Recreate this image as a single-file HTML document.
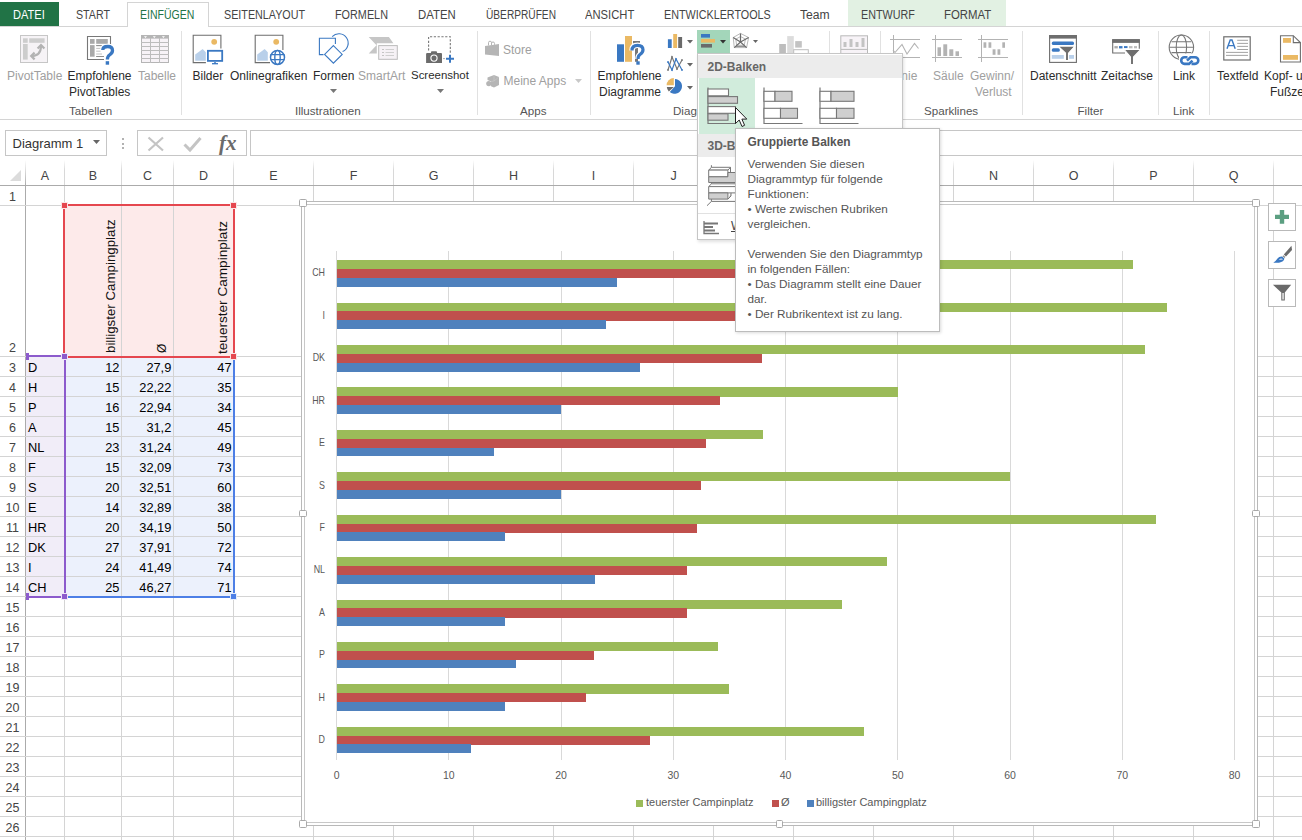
<!DOCTYPE html><html><head><meta charset="utf-8"><style>
html,body{margin:0;padding:0;}
body{width:1302px;height:840px;overflow:hidden;position:relative;background:#fff;font-family:"Liberation Sans",sans-serif;}
div{box-sizing:border-box;}
.t{position:absolute;white-space:nowrap;line-height:1;}
svg{position:absolute;overflow:visible;}
</style></head><body>
<div style="position:absolute;left:0px;top:2px;width:59px;height:24px;background:#217346"></div>
<div style="position:absolute;left:848px;top:0px;width:158px;height:26px;background:#e2f1e3"></div>
<div style="position:absolute;left:0px;top:26px;width:1302px;height:1px;background:#d4d4d4"></div>
<div style="position:absolute;left:127px;top:2px;width:82px;height:25px;background:#fff;border:1px solid #d4d4d4;border-bottom:none"></div>
<div class="t" style="left:13.3px;top:8.59px;font-size:12.3px;color:#fff;font-weight:normal;transform:scaleX(0.898);transform-origin:0 0">DATEI</div>
<div class="t" style="left:76px;top:8.59px;font-size:12.3px;color:#444;font-weight:normal;transform:scaleX(0.867);transform-origin:0 0">START</div>
<div class="t" style="left:140px;top:8.59px;font-size:12.3px;color:#217346;font-weight:normal;transform:scaleX(0.854);transform-origin:0 0">EINFÜGEN</div>
<div class="t" style="left:224px;top:8.59px;font-size:12.3px;color:#444;font-weight:normal;transform:scaleX(0.874);transform-origin:0 0">SEITENLAYOUT</div>
<div class="t" style="left:335px;top:8.59px;font-size:12.3px;color:#444;font-weight:normal;transform:scaleX(0.881);transform-origin:0 0">FORMELN</div>
<div class="t" style="left:418px;top:8.59px;font-size:12.3px;color:#444;font-weight:normal;transform:scaleX(0.925);transform-origin:0 0">DATEN</div>
<div class="t" style="left:485.7px;top:8.59px;font-size:12.3px;color:#444;font-weight:normal;transform:scaleX(0.826);transform-origin:0 0">ÜBERPRÜFEN</div>
<div class="t" style="left:584.7px;top:8.59px;font-size:12.3px;color:#444;font-weight:normal;transform:scaleX(0.913);transform-origin:0 0">ANSICHT</div>
<div class="t" style="left:664px;top:8.59px;font-size:12.3px;color:#444;font-weight:normal;transform:scaleX(0.876);transform-origin:0 0">ENTWICKLERTOOLS</div>
<div class="t" style="left:800px;top:8.59px;font-size:12.3px;color:#444;font-weight:normal;transform:scaleX(0.987);transform-origin:0 0">Team</div>
<div class="t" style="left:861px;top:8.59px;font-size:12.3px;color:#444;font-weight:normal;transform:scaleX(0.874);transform-origin:0 0">ENTWURF</div>
<div class="t" style="left:944px;top:8.59px;font-size:12.3px;color:#444;font-weight:normal;transform:scaleX(0.927);transform-origin:0 0">FORMAT</div>
<div style="position:absolute;left:0px;top:119px;width:1302px;height:1px;background:#d4d4d4"></div>
<div style="position:absolute;left:181px;top:31px;width:1px;height:84px;background:#e1e1e1"></div>
<div style="position:absolute;left:477px;top:31px;width:1px;height:84px;background:#e1e1e1"></div>
<div style="position:absolute;left:590px;top:31px;width:1px;height:84px;background:#e1e1e1"></div>
<div style="position:absolute;left:829px;top:31px;width:1px;height:84px;background:#e1e1e1"></div>
<div style="position:absolute;left:880px;top:31px;width:1px;height:84px;background:#e1e1e1"></div>
<div style="position:absolute;left:1022px;top:31px;width:1px;height:84px;background:#e1e1e1"></div>
<div style="position:absolute;left:1158px;top:31px;width:1px;height:84px;background:#e1e1e1"></div>
<div style="position:absolute;left:1209px;top:31px;width:1px;height:84px;background:#e1e1e1"></div>
<div class="t" style="left:69px;top:105.18px;font-size:11.6px;color:#555;font-weight:normal;">Tabellen</div>
<div class="t" style="left:295px;top:105.18px;font-size:11.6px;color:#555;font-weight:normal;">Illustrationen</div>
<div class="t" style="left:520px;top:105.18px;font-size:11.6px;color:#555;font-weight:normal;">Apps</div>
<div class="t" style="left:1077.5px;top:105.18px;font-size:11.6px;color:#555;font-weight:normal;">Filter</div>
<div class="t" style="left:1173px;top:105.18px;font-size:11.6px;color:#555;font-weight:normal;">Link</div>
<div class="t" style="left:924px;top:105.18px;font-size:11.6px;color:#555;font-weight:normal;">Sparklines</div>
<div class="t" style="left:673px;top:105.18px;font-size:11.6px;color:#555;font-weight:normal;">Diagramme</div>
<svg style="left:18px;top:33px" width="32" height="32" viewBox="18 33 32 32"><rect x="20.5" y="35.5" width="27" height="27" fill="#f6f3f6" stroke="#c6c6c6"/><rect x="23" y="38.3" width="4.7" height="4.5" fill="#cdcdcd"/><rect x="29.2" y="38.3" width="15.4" height="4.5" fill="#cdcdcd"/><rect x="23" y="44" width="4.7" height="15.6" fill="#cdcdcd"/><path d="M31.5 56 C38 56 41 53 41 45.5" fill="none" stroke="#b3b3b3" stroke-width="2.2"/><path d="M37.6 48.6 L41 45 L44.4 48.6" fill="none" stroke="#b3b3b3" stroke-width="2.2"/><path d="M34.6 52.6 L31.2 56 L34.6 59.4" fill="none" stroke="#b3b3b3" stroke-width="2.2"/></svg>
<div class="t" style="left:7px;top:69.84px;font-size:12px;color:#a0a0a0;font-weight:normal;">PivotTable</div>
<svg style="left:85px;top:33px" width="32" height="34" viewBox="85 33 32 34"><path d="M104 59.5 H87.5 V36.5 H110.5 V44" fill="none" stroke="#777" stroke-width="1.1"/><rect x="90" y="39" width="4.6" height="4.8" fill="#aaa"/><rect x="96.2" y="39" width="11.6" height="4.8" fill="#aaa"/><rect x="90" y="45.1" width="4.6" height="11.6" fill="#aaa"/><path d="M96.2 45.6H102M96.2 48.4H101M96.2 51.2H100.5M96.2 54H102M96.2 56.5H104" stroke="#bbb" stroke-width="0.9"/><path d="M96.2 45.6H102M96.2 56.5H104" stroke="#888" stroke-width="0.9"/><path d="M102.8 50 Q102.8 46.5 107.7 46.5 Q112.5 46.5 112.5 50.5 Q112.5 53 109.5 55 Q107.4 56.4 107.4 59.5" fill="none" stroke="#fff" stroke-width="5.5"/><path d="M102.8 50 Q102.8 46.5 107.7 46.5 Q112.5 46.5 112.5 50.5 Q112.5 53 109.5 55 Q107.4 56.4 107.4 59.5" fill="none" stroke="#3a78c2" stroke-width="3.3"/><rect x="105.7" y="61.2" width="3.4" height="3.5" fill="#3a78c2"/></svg>
<div class="t" style="left:67.5px;top:69.84px;font-size:12px;color:#2b2b2b;font-weight:normal;">Empfohlene</div>
<div class="t" style="left:69px;top:85.84px;font-size:12px;color:#2b2b2b;font-weight:normal;">PivotTables</div>
<svg style="left:139px;top:33px" width="32" height="32" viewBox="139 33 32 32"><rect x="141.5" y="35.5" width="27" height="27" fill="#f7f3f7" stroke="#b5b5b5"/><rect x="141" y="35" width="28" height="3.6" fill="#b5b5b5"/><path d="M141 42.5H169M141 46.5H169M141 50.5H169M141 54.5H169M141 58.5H169M150.5 38V63M159.5 38V63" stroke="#bdbdbd" stroke-width="1"/><path d="M144 36.3H147L145.5 38Z M152.8 36.3H155.8L154.3 38Z M161.9 36.3H164.9L163.4 38Z" fill="#fff"/></svg>
<div class="t" style="left:138px;top:69.84px;font-size:12px;color:#a0a0a0;font-weight:normal;">Tabelle</div>
<svg style="left:190px;top:33px" width="36" height="34" viewBox="190 33 36 34"><path d="M205.9 62.6 H193.2 V35.2 H220.89999999999998 V48.6" fill="none" stroke="#6e6e6e" stroke-width="1.1"/><circle cx="214.2" cy="41.800000000000004" r="2.9" fill="#eab964"/><path d="M195.2 60.800000000000004 V54.6 L202.7 49.0 L205.79999999999998 52.2 V60.800000000000004Z" fill="#b9d0ea"/><rect x="207.9" y="50.8" width="14.3" height="10.1" fill="#fff" stroke="#3a78c2" stroke-width="1.8"/><path d="M212 63.7 H218" stroke="#3a78c2" stroke-width="1.3"/><path d="M214 63 H216" stroke="#3a78c2" stroke-width="1.5"/></svg>
<div class="t" style="left:192.5px;top:69.84px;font-size:12px;color:#2b2b2b;font-weight:normal;">Bilder</div>
<svg style="left:252px;top:33px" width="36" height="34" viewBox="252 33 36 34"><path d="M270 62.6 H255.2 V35.2 H282.9 V50" fill="none" stroke="#6e6e6e" stroke-width="1.1"/><circle cx="276.2" cy="41.800000000000004" r="2.9" fill="#eab964"/><path d="M257.2 60.800000000000004 V54.6 L264.7 49.0 L267.8 52.2 V60.800000000000004Z" fill="#b9d0ea"/><circle cx="277.5" cy="57.4" r="8.2" fill="#fff"/><circle cx="277.5" cy="57.4" r="7" fill="none" stroke="#3a78c2" stroke-width="1.5"/><ellipse cx="277.5" cy="57.4" rx="2.7" ry="7" fill="none" stroke="#3a78c2" stroke-width="1.4"/><path d="M270.5 54.6H284.5M270.5 59.6H284.5" stroke="#3a78c2" stroke-width="1.4"/></svg>
<div class="t" style="left:230px;top:69.84px;font-size:12px;color:#2b2b2b;font-weight:normal;">Onlinegrafiken</div>
<svg style="left:316px;top:31px" width="36" height="36" viewBox="316 31 36 36"><path d="M323.5 54.6 H319.4 V38.3 H335.4 V44" fill="none" stroke="#3a78c2" stroke-width="1.1"/><path d="M332.2 36.6 A 9.3 9.3 0 1 1 342.6 51.6" fill="none" stroke="#3a78c2" stroke-width="1.1"/><path d="M333.4 45.6 L342.2 54.4 L333.4 63.2 L324.6 54.4Z" fill="none" stroke="#3a78c2" stroke-width="1.1"/></svg>
<div class="t" style="left:313px;top:69.84px;font-size:12px;color:#2b2b2b;font-weight:normal;">Formen</div>
<svg style="left:330px;top:89px" width="7" height="4" viewBox="0 0 7 4"><path d="M0 0H7L3.5 4Z" fill="#777"/></svg>
<svg style="left:366px;top:34px" width="34" height="28" viewBox="366 34 34 28"><path d="M368.7 37.1 H388.9 L393.4 43.3 H376.8 V53.6 H368.7 L376.5 45.2Z" fill="#c6c6c6"/><rect x="378.7" y="45.6" width="18.6" height="13.7" fill="#f6f2f6" stroke="#bcbcbc" stroke-width="1"/><path d="M382 49.5H384M382 52.5H384M382 55.5H384" stroke="#c4c4c4" stroke-width="1"/><path d="M385.5 49.5H394M385.5 52.5H394M385.5 55.5H394" stroke="#cfcfcf" stroke-width="1"/></svg>
<div class="t" style="left:358px;top:69.84px;font-size:12px;color:#a0a0a0;font-weight:normal;">SmartArt</div>
<svg style="left:424px;top:34px" width="32" height="32" viewBox="424 34 32 32"><path d="M428.6 50.5 V36.7 H450.3 V53.6" fill="none" stroke="#777" stroke-width="1.1" stroke-dasharray="2.2,1.6"/><path d="M426.1 54 Q426.1 53 427.1 53 H430.8 L431.4 51.2 H436.6 L437.2 53 H441 Q442 53 442 54 V62.9 H426.1Z" fill="#6b6b6b"/><circle cx="434" cy="58.1" r="3.1" fill="none" stroke="#fff" stroke-width="1.1"/><path d="M443 58.6H445" stroke="#999" stroke-width="0.8"/><path d="M450 54.8V62.8M446 58.8H454" stroke="#3a78c2" stroke-width="2"/></svg>
<div class="t" style="left:411px;top:70.31px;font-size:11.45px;color:#2b2b2b;font-weight:normal;">Screenshot</div>
<svg style="left:437px;top:89px" width="7" height="4" viewBox="0 0 7 4"><path d="M0 0H7L3.5 4Z" fill="#777"/></svg>
<svg style="left:483px;top:39px" width="18" height="20" viewBox="483 39 18 20"><path d="M485 46 L499 44 V56 L485 54.5Z" fill="#b5b5b5"/><path d="M488.5 45.5 V42.7 Q488.5 41.2 490 41.2 Q491.5 41.2 491.5 42.7 V45 M491.5 43.3 Q491.5 42 493 42 Q494.5 42 494.5 43.3 V44.8" fill="none" stroke="#b5b5b5" stroke-width="1"/></svg>
<div class="t" style="left:503px;top:43.84px;font-size:12px;color:#a0a0a0;font-weight:normal;">Store</div>
<svg style="left:483px;top:72px" width="18" height="18" viewBox="483 72 18 18"><path d="M487.5 77.5 L494 75 L499 77 V85 L494 87.5 L491 86.3 V81.5 L487.5 80Z" fill="#b5b5b5"/><path d="M494 75 V81 M491 81.5 L494 81 L499 77" fill="none" stroke="#ccc" stroke-width="0.5"/><circle cx="488.8" cy="83.6" r="2.6" fill="#b5b5b5"/></svg>
<div class="t" style="left:503.5px;top:74.84px;font-size:12px;color:#a0a0a0;font-weight:normal;">Meine Apps</div>
<svg style="left:575px;top:79px" width="7" height="4" viewBox="0 0 7 4"><path d="M0 0H7L3.5 4Z" fill="#c8c8c8"/></svg>
<svg style="left:614px;top:34px" width="34" height="34" viewBox="614 34 34 34"><rect x="617" y="44.3" width="7" height="17.5" fill="#3a78c2"/><rect x="625" y="36" width="7" height="25.8" fill="#eab964"/><rect x="633" y="41" width="7" height="3" fill="#777"/><path d="M636.5 44 V61.8" stroke="#777" stroke-width="3"/><path d="M632 50.5 Q632 45.3 637.5 45.3 Q643 45.3 643 49.8 Q643 52.5 640 54.5 Q638 55.8 638 59" fill="none" stroke="#fff" stroke-width="5.5"/><path d="M632 50.5 Q632 45.3 637.5 45.3 Q643 45.3 643 49.8 Q643 52.5 640 54.5 Q638 55.8 638 59" fill="none" stroke="#3a78c2" stroke-width="3.2"/><rect x="636.3" y="61.3" width="3.4" height="3.4" fill="#3a78c2"/></svg>
<div class="t" style="left:597.5px;top:69.84px;font-size:12px;color:#2b2b2b;font-weight:normal;">Empfohlene</div>
<div class="t" style="left:599px;top:85.84px;font-size:12px;color:#2b2b2b;font-weight:normal;">Diagramme</div>
<svg style="left:666px;top:32px" width="30" height="62" viewBox="666 32 30 62"><rect x="667.9" y="39.25" width="3.8" height="8.75" fill="#3a78c2"/><rect x="673.2" y="34" width="3.9" height="14" fill="#eab964"/><rect x="678.2" y="37" width="3.9" height="11" fill="#6a6a6a"/><path d="M668 70 L672 57 L677 69 L682 60" fill="none" stroke="#777" stroke-width="1.2"/><path d="M668 62 L672 70 L676 59 L682 70" fill="none" stroke="#3a78c2" stroke-width="1.2"/><circle cx="668" cy="70" r="0.9" fill="#777"/><circle cx="672" cy="57" r="0.9" fill="#777"/><circle cx="677" cy="69" r="0.9" fill="#777"/><circle cx="682" cy="60" r="0.9" fill="#777"/><circle cx="668" cy="62" r="0.9" fill="#3a78c2"/><circle cx="672" cy="70" r="0.9" fill="#3a78c2"/><circle cx="676" cy="59" r="0.9" fill="#3a78c2"/><circle cx="682" cy="70" r="0.9" fill="#3a78c2"/><path d="M675 86.3 V78.9 A7.4 7.4 0 1 1 669.8 91.9Z" fill="#3a78c2"/><path d="M673.8 85.3 H666.6 A7.2 7.2 0 0 1 673.8 78.1Z" fill="#eab964"/><path d="M673.8 87 H666.8 A7.4 7.4 0 0 0 668.8 91.5Z" fill="#6a6a6a"/></svg>
<svg style="left:687px;top:40px" width="6" height="3.5" viewBox="0 0 6 3.5"><path d="M0 0H6L3 3.5Z" fill="#666"/></svg>
<svg style="left:687px;top:63px" width="6" height="3.5" viewBox="0 0 6 3.5"><path d="M0 0H6L3 3.5Z" fill="#666"/></svg>
<svg style="left:687px;top:86px" width="6" height="3.5" viewBox="0 0 6 3.5"><path d="M0 0H6L3 3.5Z" fill="#666"/></svg>
<div style="position:absolute;left:697px;top:30px;width:33px;height:23px;background:#a3d6ba"></div>
<svg style="left:699px;top:32px" width="20" height="18" viewBox="699 32 20 18"><rect x="701" y="34" width="9" height="3.6" fill="#3a78c2"/><rect x="701" y="39" width="14" height="3.6" fill="#eab964"/><rect x="701" y="44" width="11" height="3.6" fill="#6a6a6a"/></svg>
<svg style="left:720px;top:40px" width="6" height="3.5" viewBox="0 0 6 3.5"><path d="M0 0H6L3 3.5Z" fill="#333"/></svg>
<svg style="left:731px;top:31px" width="20" height="19" viewBox="731 31 20 19"><path d="M740.5 33.4 L748.6 37.5 L746.6 47.6 L734.3 47.6 L733.2 37.5Z M740.5 36.5 L745.5 39.2 L744.2 45.2 L736.6 45.2 L735.8 39.2Z" fill="none" stroke="#999" stroke-width="0.7"/><path d="M740.5 33.4 V42 M748.6 37.5 L740.5 42 M746.6 47.6 L740.5 42 M734.3 47.6 L740.5 42 M733.2 37.5 L740.5 42" stroke="#6a6a6a" stroke-width="1.2"/><path d="M736 46.3 H745" stroke="#777" stroke-width="1"/></svg>
<svg style="left:753px;top:40px" width="5" height="3" viewBox="0 0 5 3"><path d="M0 0H5L2.5 3Z" fill="#666"/></svg>
<svg style="left:777px;top:34px" width="34" height="20" viewBox="777 34 34 20"><rect x="779.2" y="44" width="6.7" height="10" fill="#bdbdbd"/><rect x="787.2" y="36.1" width="6.6" height="18" fill="#dcdcdc"/><rect x="795.2" y="41.1" width="6.6" height="6.5" fill="#c3c3c3"/><rect x="793.7" y="49.7" width="14.6" height="5" fill="#fff" stroke="#bdbdbd" stroke-width="1"/></svg>
<svg style="left:838px;top:33px" width="32" height="22" viewBox="838 33 32 22"><rect x="840.8" y="35.8" width="26.7" height="19" fill="#f7f3f7" stroke="#b9b9b9" stroke-width="1"/><rect x="843.5" y="42" width="3" height="5" fill="#c3c3c3"/><rect x="849.5" y="39" width="3" height="8" fill="#c3c3c3"/><rect x="855.5" y="42" width="3" height="5" fill="#c3c3c3"/><rect x="861.5" y="38" width="3" height="9" fill="#c3c3c3"/><path d="M841 49.4H867" stroke="#b9b9b9" stroke-width="1"/></svg>
<svg style="left:888px;top:33px" width="34" height="32" viewBox="888 33 34 32"><path d="M893.5 35V62M890 39.5H920M890 57.5H920" stroke="#b3b3b3" stroke-width="1"/><path d="M893 50 L895 52.5 L902 44.5 L907 54 L914.5 43.5 L918.5 48.5" fill="none" stroke="#b3b3b3" stroke-width="1.1"/></svg>
<div class="t" style="left:892px;top:69.84px;font-size:12px;color:#a0a0a0;font-weight:normal;">Linie</div>
<svg style="left:930px;top:33px" width="34" height="32" viewBox="930 33 34 32"><path d="M935.5 35V62M932 39.5H962M932 57.5H962" stroke="#b3b3b3" stroke-width="1"/><rect x="937.5" y="47.3" width="3.5" height="8.7" fill="#b3b3b3"/><rect x="943.3" y="44.3" width="3.9" height="11.7" fill="#b3b3b3"/><rect x="949.3" y="49.3" width="4" height="6.7" fill="#b3b3b3"/><rect x="955.5" y="51.3" width="3.5" height="4.7" fill="#b3b3b3"/></svg>
<div class="t" style="left:933px;top:69.84px;font-size:12px;color:#a0a0a0;font-weight:normal;">Säule</div>
<svg style="left:976px;top:33px" width="34" height="32" viewBox="976 33 34 32"><path d="M981.5 35V62M978 39.5H1008M978 57.5H1008" stroke="#b3b3b3" stroke-width="1"/><rect x="983.5" y="42.3" width="2.8" height="5.5" fill="#b3b3b3"/><rect x="988.5" y="42.3" width="2.8" height="5.5" fill="#b3b3b3"/><rect x="992.6" y="49.3" width="2.9" height="5.5" fill="#b3b3b3"/><rect x="997.5" y="49.3" width="2.8" height="5.5" fill="#b3b3b3"/><rect x="1002.3" y="42.3" width="2.7" height="5.5" fill="#b3b3b3"/></svg>
<div class="t" style="left:970px;top:69.84px;font-size:12px;color:#a0a0a0;font-weight:normal;">Gewinn/</div>
<div class="t" style="left:975px;top:85.84px;font-size:12px;color:#a0a0a0;font-weight:normal;">Verlust</div>
<svg style="left:1047px;top:33px" width="32" height="32" viewBox="1047 33 32 32"><rect x="1049.6" y="35.6" width="26.8" height="26.8" fill="#fff" stroke="#6e6e6e" stroke-width="1.1"/><rect x="1049.1" y="35.1" width="27.8" height="3.5" fill="#6e6e6e"/><rect x="1051.8" y="41.4" width="22.2" height="3.5" rx="1.5" fill="#3a78c2"/><rect x="1051.8" y="48.2" width="8" height="3.6" rx="1.5" fill="#3a78c2"/><rect x="1051.8" y="55" width="12" height="3.8" fill="#b9d0ea"/><rect x="1069" y="55" width="5" height="3.8" fill="#b9d0ea"/><path d="M1058.1 46.1 H1075 L1068.5 53.1 V60.6 H1065.5 V53.1Z" fill="#6e6e6e" stroke="#fff" stroke-width="1.1"/></svg>
<div class="t" style="left:1030px;top:69.84px;font-size:12px;color:#2b2b2b;font-weight:normal;">Datenschnitt</div>
<svg style="left:1110px;top:37px" width="33" height="30" viewBox="1110 37 33 30"><path d="M1125 53 H1112.7 V39.7 H1139.3 V49" fill="none" stroke="#6e6e6e" stroke-width="1.1"/><rect x="1112.2" y="39.2" width="27.6" height="3.7" fill="#6e6e6e"/><rect x="1114.4" y="46.1" width="3.4" height="2.3" fill="#aaa"/><rect x="1119" y="46.1" width="3.5" height="2.3" fill="#3a78c2"/><rect x="1124" y="46.1" width="3.5" height="2" fill="#3a78c2"/><rect x="1129" y="46.1" width="3.5" height="2.3" fill="#bbb"/><rect x="1134" y="46.1" width="3" height="2.3" fill="#bbb"/><path d="M1124 49.4 H1140.8 L1133.5 57 V64.5 H1130.5 V57Z" fill="#6e6e6e" stroke="#fff" stroke-width="1.1"/></svg>
<div class="t" style="left:1101px;top:69.84px;font-size:12px;color:#2b2b2b;font-weight:normal;">Zeitachse</div>
<svg style="left:1166px;top:33px" width="38" height="34" viewBox="1166 33 38 34"><circle cx="1181.4" cy="47.2" r="12.2" fill="none" stroke="#777" stroke-width="1.1"/><ellipse cx="1181.4" cy="47.2" rx="5.2" ry="12.2" fill="none" stroke="#777" stroke-width="1.1"/><path d="M1169.2 47.2H1193.6M1171.5 41.8H1191.3M1171.5 52.6H1191.3" stroke="#777" stroke-width="1.1"/><path d="M1179 53.5 H1202 V67 H1179Z" fill="#fff"/><path d="M1187.5 57.3 H1184.5 A3.3 3.3 0 0 0 1184.5 63.9 H1189 L1192.5 60.6" fill="none" stroke="#3a78c2" stroke-width="2.6"/><path d="M1191.5 63.9 H1195 A3.3 3.3 0 0 0 1195 57.3 H1190.5 L1187 60.6" fill="none" stroke="#3a78c2" stroke-width="2.6"/></svg>
<div class="t" style="left:1173px;top:69.84px;font-size:12px;color:#2b2b2b;font-weight:normal;">Link</div>
<svg style="left:1221px;top:34px" width="32" height="30" viewBox="1221 34 32 30"><rect x="1223.8" y="36.8" width="26.4" height="23.2" fill="#fff" stroke="#6e6e6e" stroke-width="1.2"/><path d="M1227 48.8 L1230.2 40 H1232 L1235.2 48.8 M1228.3 45.6 H1234" fill="none" stroke="#3a78c2" stroke-width="1.4"/><path d="M1237.2 40.3H1248M1237.2 43.4H1248M1237.2 46.4H1248M1237.2 49.5H1248M1226 52.4H1248M1226 55.4H1248" stroke="#999" stroke-width="0.9"/></svg>
<div class="t" style="left:1217px;top:69.84px;font-size:12px;color:#2b2b2b;font-weight:normal;">Textfeld</div>
<svg style="left:1278px;top:33px" width="24" height="32" viewBox="1278 33 24 32"><path d="M1280.5 35.7 H1293.3 L1300.4 42.6 V62 H1280.5Z" fill="#fff" stroke="#6e6e6e" stroke-width="1.1"/><path d="M1293.3 35.7 V42.6 H1300.4" fill="none" stroke="#6e6e6e" stroke-width="1.1"/><rect x="1283" y="38" width="8" height="4.8" fill="#eab964"/><rect x="1283" y="55" width="15" height="4.8" fill="#eab964"/></svg>
<div class="t" style="left:1264px;top:69.84px;font-size:12px;color:#2b2b2b;font-weight:normal;">Kopf- und</div>
<div class="t" style="left:1270px;top:85.84px;font-size:12px;color:#2b2b2b;font-weight:normal;">Fußzeile</div>
<div style="position:absolute;left:5px;top:130px;width:102px;height:26px;border:1px solid #c6c6c6;background:#fff"></div>
<div class="t" style="left:12.5px;top:137.0px;font-size:13px;color:#333;font-weight:normal;">Diagramm 1</div>
<svg style="left:93px;top:140px" width="7" height="4" viewBox="0 0 7 4"><path d="M0 0H7L3.5 4Z" fill="#666"/></svg>
<div style="position:absolute;left:121.5px;top:138px;width:2px;height:2px;background:#999;border-radius:1px"></div>
<div style="position:absolute;left:121.5px;top:142.5px;width:2px;height:2px;background:#999;border-radius:1px"></div>
<div style="position:absolute;left:121.5px;top:147px;width:2px;height:2px;background:#999;border-radius:1px"></div>
<div style="position:absolute;left:137px;top:130px;width:110px;height:26px;border:1px solid #c6c6c6;background:#fff"></div>
<svg style="left:147px;top:136px" width="18" height="16" viewBox="0 0 18 16"><path d="M1.5 1.5L16 14.5M16 1.5L1.5 14.5" stroke="#c4c4c4" stroke-width="2.2"/></svg>
<svg style="left:183px;top:136px" width="19" height="16" viewBox="0 0 19 16"><path d="M1.5 8.5 L7 14 L17.5 2" fill="none" stroke="#c4c4c4" stroke-width="3"/></svg>
<div class="t" style="left:219px;top:133px;font-family:'Liberation Serif',serif;font-style:italic;font-weight:bold;font-size:21px;color:#6a6a6a;letter-spacing:0px">fx</div>
<div style="position:absolute;left:250px;top:130px;width:1060px;height:26px;border:1px solid #c6c6c6;background:#fff"></div>
<div style="position:absolute;left:0px;top:160px;width:1302px;height:25px;background:#fff"></div>
<div style="position:absolute;left:64px;top:160px;width:1px;height:25px;background:linear-gradient(#fff,#d8d8d8 40%,#d8d8d8)"></div>
<div style="position:absolute;left:121px;top:160px;width:1px;height:25px;background:linear-gradient(#fff,#d8d8d8 40%,#d8d8d8)"></div>
<div style="position:absolute;left:173px;top:160px;width:1px;height:25px;background:linear-gradient(#fff,#d8d8d8 40%,#d8d8d8)"></div>
<div style="position:absolute;left:233px;top:160px;width:1px;height:25px;background:linear-gradient(#fff,#d8d8d8 40%,#d8d8d8)"></div>
<div style="position:absolute;left:313px;top:160px;width:1px;height:25px;background:linear-gradient(#fff,#d8d8d8 40%,#d8d8d8)"></div>
<div style="position:absolute;left:393px;top:160px;width:1px;height:25px;background:linear-gradient(#fff,#d8d8d8 40%,#d8d8d8)"></div>
<div style="position:absolute;left:473px;top:160px;width:1px;height:25px;background:linear-gradient(#fff,#d8d8d8 40%,#d8d8d8)"></div>
<div style="position:absolute;left:553px;top:160px;width:1px;height:25px;background:linear-gradient(#fff,#d8d8d8 40%,#d8d8d8)"></div>
<div style="position:absolute;left:633px;top:160px;width:1px;height:25px;background:linear-gradient(#fff,#d8d8d8 40%,#d8d8d8)"></div>
<div style="position:absolute;left:713px;top:160px;width:1px;height:25px;background:linear-gradient(#fff,#d8d8d8 40%,#d8d8d8)"></div>
<div style="position:absolute;left:793px;top:160px;width:1px;height:25px;background:linear-gradient(#fff,#d8d8d8 40%,#d8d8d8)"></div>
<div style="position:absolute;left:873px;top:160px;width:1px;height:25px;background:linear-gradient(#fff,#d8d8d8 40%,#d8d8d8)"></div>
<div style="position:absolute;left:953px;top:160px;width:1px;height:25px;background:linear-gradient(#fff,#d8d8d8 40%,#d8d8d8)"></div>
<div style="position:absolute;left:1033px;top:160px;width:1px;height:25px;background:linear-gradient(#fff,#d8d8d8 40%,#d8d8d8)"></div>
<div style="position:absolute;left:1113px;top:160px;width:1px;height:25px;background:linear-gradient(#fff,#d8d8d8 40%,#d8d8d8)"></div>
<div style="position:absolute;left:1193px;top:160px;width:1px;height:25px;background:linear-gradient(#fff,#d8d8d8 40%,#d8d8d8)"></div>
<div style="position:absolute;left:1273px;top:160px;width:1px;height:25px;background:linear-gradient(#fff,#d8d8d8 40%,#d8d8d8)"></div>
<div class="t" style="left:-105.0px;width:300px;text-align:center;top:170.22px;font-size:12.5px;color:#444;font-weight:normal;">A</div>
<div class="t" style="left:-57.0px;width:300px;text-align:center;top:170.22px;font-size:12.5px;color:#444;font-weight:normal;">B</div>
<div class="t" style="left:-2.5px;width:300px;text-align:center;top:170.22px;font-size:12.5px;color:#444;font-weight:normal;">C</div>
<div class="t" style="left:53.5px;width:300px;text-align:center;top:170.22px;font-size:12.5px;color:#444;font-weight:normal;">D</div>
<div class="t" style="left:123.5px;width:300px;text-align:center;top:170.22px;font-size:12.5px;color:#444;font-weight:normal;">E</div>
<div class="t" style="left:203.5px;width:300px;text-align:center;top:170.22px;font-size:12.5px;color:#444;font-weight:normal;">F</div>
<div class="t" style="left:283.5px;width:300px;text-align:center;top:170.22px;font-size:12.5px;color:#444;font-weight:normal;">G</div>
<div class="t" style="left:363.5px;width:300px;text-align:center;top:170.22px;font-size:12.5px;color:#444;font-weight:normal;">H</div>
<div class="t" style="left:443.5px;width:300px;text-align:center;top:170.22px;font-size:12.5px;color:#444;font-weight:normal;">I</div>
<div class="t" style="left:523.5px;width:300px;text-align:center;top:170.22px;font-size:12.5px;color:#444;font-weight:normal;">J</div>
<div class="t" style="left:603.5px;width:300px;text-align:center;top:170.22px;font-size:12.5px;color:#444;font-weight:normal;">K</div>
<div class="t" style="left:683.5px;width:300px;text-align:center;top:170.22px;font-size:12.5px;color:#444;font-weight:normal;">L</div>
<div class="t" style="left:763.5px;width:300px;text-align:center;top:170.22px;font-size:12.5px;color:#444;font-weight:normal;">M</div>
<div class="t" style="left:843.5px;width:300px;text-align:center;top:170.22px;font-size:12.5px;color:#444;font-weight:normal;">N</div>
<div class="t" style="left:923.5px;width:300px;text-align:center;top:170.22px;font-size:12.5px;color:#444;font-weight:normal;">O</div>
<div class="t" style="left:1003.5px;width:300px;text-align:center;top:170.22px;font-size:12.5px;color:#444;font-weight:normal;">P</div>
<div class="t" style="left:1083.5px;width:300px;text-align:center;top:170.22px;font-size:12.5px;color:#444;font-weight:normal;">Q</div>
<div class="t" style="left:1163.5px;width:300px;text-align:center;top:170.22px;font-size:12.5px;color:#444;font-weight:normal;">R</div>
<svg style="left:10px;top:170px" width="12" height="12" viewBox="0 0 12 12"><path d="M11 0 V11 H0Z" fill="#dcdcdc"/></svg>
<div style="position:absolute;left:0px;top:185px;width:1302px;height:1px;background:#ababab"></div>
<div style="position:absolute;left:25px;top:160px;width:1px;height:680px;background:#ababab"></div>
<div style="position:absolute;left:25px;top:160px;width:1px;height:25px;background:linear-gradient(#fff,#ababab)"></div>
<div style="position:absolute;left:64px;top:205px;width:170px;height:152px;background:#fdeaea"></div>
<div style="position:absolute;left:26px;top:357px;width:39px;height:240px;background:#f1edf8"></div>
<div style="position:absolute;left:65px;top:357px;width:169px;height:240px;background:#ecf1fc"></div>
<div style="position:absolute;left:0px;top:205px;width:1302px;height:1px;background:#d4d4d4"></div>
<div style="position:absolute;left:0px;top:356px;width:1302px;height:1px;background:#d4d4d4"></div>
<div style="position:absolute;left:0px;top:376px;width:1302px;height:1px;background:#d4d4d4"></div>
<div style="position:absolute;left:0px;top:396px;width:1302px;height:1px;background:#d4d4d4"></div>
<div style="position:absolute;left:0px;top:416px;width:1302px;height:1px;background:#d4d4d4"></div>
<div style="position:absolute;left:0px;top:436px;width:1302px;height:1px;background:#d4d4d4"></div>
<div style="position:absolute;left:0px;top:456px;width:1302px;height:1px;background:#d4d4d4"></div>
<div style="position:absolute;left:0px;top:476px;width:1302px;height:1px;background:#d4d4d4"></div>
<div style="position:absolute;left:0px;top:496px;width:1302px;height:1px;background:#d4d4d4"></div>
<div style="position:absolute;left:0px;top:516px;width:1302px;height:1px;background:#d4d4d4"></div>
<div style="position:absolute;left:0px;top:536px;width:1302px;height:1px;background:#d4d4d4"></div>
<div style="position:absolute;left:0px;top:556px;width:1302px;height:1px;background:#d4d4d4"></div>
<div style="position:absolute;left:0px;top:576px;width:1302px;height:1px;background:#d4d4d4"></div>
<div style="position:absolute;left:0px;top:596px;width:1302px;height:1px;background:#d4d4d4"></div>
<div style="position:absolute;left:0px;top:616px;width:1302px;height:1px;background:#d4d4d4"></div>
<div style="position:absolute;left:0px;top:636px;width:1302px;height:1px;background:#d4d4d4"></div>
<div style="position:absolute;left:0px;top:656px;width:1302px;height:1px;background:#d4d4d4"></div>
<div style="position:absolute;left:0px;top:676px;width:1302px;height:1px;background:#d4d4d4"></div>
<div style="position:absolute;left:0px;top:696px;width:1302px;height:1px;background:#d4d4d4"></div>
<div style="position:absolute;left:0px;top:716px;width:1302px;height:1px;background:#d4d4d4"></div>
<div style="position:absolute;left:0px;top:736px;width:1302px;height:1px;background:#d4d4d4"></div>
<div style="position:absolute;left:0px;top:756px;width:1302px;height:1px;background:#d4d4d4"></div>
<div style="position:absolute;left:0px;top:776px;width:1302px;height:1px;background:#d4d4d4"></div>
<div style="position:absolute;left:0px;top:796px;width:1302px;height:1px;background:#d4d4d4"></div>
<div style="position:absolute;left:0px;top:816px;width:1302px;height:1px;background:#d4d4d4"></div>
<div style="position:absolute;left:0px;top:836px;width:1302px;height:1px;background:#d4d4d4"></div>
<div style="position:absolute;left:0px;top:205px;width:25px;height:1px;background:#d4d4d4"></div>
<div style="position:absolute;left:0px;top:356px;width:25px;height:1px;background:#d4d4d4"></div>
<div style="position:absolute;left:0px;top:376px;width:25px;height:1px;background:#d4d4d4"></div>
<div style="position:absolute;left:0px;top:396px;width:25px;height:1px;background:#d4d4d4"></div>
<div style="position:absolute;left:0px;top:416px;width:25px;height:1px;background:#d4d4d4"></div>
<div style="position:absolute;left:0px;top:436px;width:25px;height:1px;background:#d4d4d4"></div>
<div style="position:absolute;left:0px;top:456px;width:25px;height:1px;background:#d4d4d4"></div>
<div style="position:absolute;left:0px;top:476px;width:25px;height:1px;background:#d4d4d4"></div>
<div style="position:absolute;left:0px;top:496px;width:25px;height:1px;background:#d4d4d4"></div>
<div style="position:absolute;left:0px;top:516px;width:25px;height:1px;background:#d4d4d4"></div>
<div style="position:absolute;left:0px;top:536px;width:25px;height:1px;background:#d4d4d4"></div>
<div style="position:absolute;left:0px;top:556px;width:25px;height:1px;background:#d4d4d4"></div>
<div style="position:absolute;left:0px;top:576px;width:25px;height:1px;background:#d4d4d4"></div>
<div style="position:absolute;left:0px;top:596px;width:25px;height:1px;background:#d4d4d4"></div>
<div style="position:absolute;left:0px;top:616px;width:25px;height:1px;background:#d4d4d4"></div>
<div style="position:absolute;left:0px;top:636px;width:25px;height:1px;background:#d4d4d4"></div>
<div style="position:absolute;left:0px;top:656px;width:25px;height:1px;background:#d4d4d4"></div>
<div style="position:absolute;left:0px;top:676px;width:25px;height:1px;background:#d4d4d4"></div>
<div style="position:absolute;left:0px;top:696px;width:25px;height:1px;background:#d4d4d4"></div>
<div style="position:absolute;left:0px;top:716px;width:25px;height:1px;background:#d4d4d4"></div>
<div style="position:absolute;left:0px;top:736px;width:25px;height:1px;background:#d4d4d4"></div>
<div style="position:absolute;left:0px;top:756px;width:25px;height:1px;background:#d4d4d4"></div>
<div style="position:absolute;left:0px;top:776px;width:25px;height:1px;background:#d4d4d4"></div>
<div style="position:absolute;left:0px;top:796px;width:25px;height:1px;background:#d4d4d4"></div>
<div style="position:absolute;left:0px;top:816px;width:25px;height:1px;background:#d4d4d4"></div>
<div style="position:absolute;left:0px;top:836px;width:25px;height:1px;background:#d4d4d4"></div>
<div style="position:absolute;left:64px;top:186px;width:1px;height:654px;background:#d4d4d4"></div>
<div style="position:absolute;left:121px;top:186px;width:1px;height:654px;background:#d4d4d4"></div>
<div style="position:absolute;left:173px;top:186px;width:1px;height:654px;background:#d4d4d4"></div>
<div style="position:absolute;left:233px;top:186px;width:1px;height:654px;background:#d4d4d4"></div>
<div style="position:absolute;left:313px;top:186px;width:1px;height:654px;background:#d4d4d4"></div>
<div style="position:absolute;left:393px;top:186px;width:1px;height:654px;background:#d4d4d4"></div>
<div style="position:absolute;left:473px;top:186px;width:1px;height:654px;background:#d4d4d4"></div>
<div style="position:absolute;left:553px;top:186px;width:1px;height:654px;background:#d4d4d4"></div>
<div style="position:absolute;left:633px;top:186px;width:1px;height:654px;background:#d4d4d4"></div>
<div style="position:absolute;left:713px;top:186px;width:1px;height:654px;background:#d4d4d4"></div>
<div style="position:absolute;left:793px;top:186px;width:1px;height:654px;background:#d4d4d4"></div>
<div style="position:absolute;left:873px;top:186px;width:1px;height:654px;background:#d4d4d4"></div>
<div style="position:absolute;left:953px;top:186px;width:1px;height:654px;background:#d4d4d4"></div>
<div style="position:absolute;left:1033px;top:186px;width:1px;height:654px;background:#d4d4d4"></div>
<div style="position:absolute;left:1113px;top:186px;width:1px;height:654px;background:#d4d4d4"></div>
<div style="position:absolute;left:1193px;top:186px;width:1px;height:654px;background:#d4d4d4"></div>
<div style="position:absolute;left:1273px;top:186px;width:1px;height:654px;background:#d4d4d4"></div>
<div class="t" style="left:-137.5px;width:300px;text-align:center;top:191.42px;font-size:12.5px;color:#444;font-weight:normal;">1</div>
<div class="t" style="left:-137.5px;width:300px;text-align:center;top:342.42px;font-size:12.5px;color:#444;font-weight:normal;">2</div>
<div class="t" style="left:-137.5px;width:300px;text-align:center;top:362.42px;font-size:12.5px;color:#444;font-weight:normal;">3</div>
<div class="t" style="left:-137.5px;width:300px;text-align:center;top:382.42px;font-size:12.5px;color:#444;font-weight:normal;">4</div>
<div class="t" style="left:-137.5px;width:300px;text-align:center;top:402.42px;font-size:12.5px;color:#444;font-weight:normal;">5</div>
<div class="t" style="left:-137.5px;width:300px;text-align:center;top:422.42px;font-size:12.5px;color:#444;font-weight:normal;">6</div>
<div class="t" style="left:-137.5px;width:300px;text-align:center;top:442.42px;font-size:12.5px;color:#444;font-weight:normal;">7</div>
<div class="t" style="left:-137.5px;width:300px;text-align:center;top:462.42px;font-size:12.5px;color:#444;font-weight:normal;">8</div>
<div class="t" style="left:-137.5px;width:300px;text-align:center;top:482.42px;font-size:12.5px;color:#444;font-weight:normal;">9</div>
<div class="t" style="left:-137.5px;width:300px;text-align:center;top:502.42px;font-size:12.5px;color:#444;font-weight:normal;">10</div>
<div class="t" style="left:-137.5px;width:300px;text-align:center;top:522.42px;font-size:12.5px;color:#444;font-weight:normal;">11</div>
<div class="t" style="left:-137.5px;width:300px;text-align:center;top:542.42px;font-size:12.5px;color:#444;font-weight:normal;">12</div>
<div class="t" style="left:-137.5px;width:300px;text-align:center;top:562.42px;font-size:12.5px;color:#444;font-weight:normal;">13</div>
<div class="t" style="left:-137.5px;width:300px;text-align:center;top:582.42px;font-size:12.5px;color:#444;font-weight:normal;">14</div>
<div class="t" style="left:-137.5px;width:300px;text-align:center;top:602.42px;font-size:12.5px;color:#444;font-weight:normal;">15</div>
<div class="t" style="left:-137.5px;width:300px;text-align:center;top:622.42px;font-size:12.5px;color:#444;font-weight:normal;">16</div>
<div class="t" style="left:-137.5px;width:300px;text-align:center;top:642.42px;font-size:12.5px;color:#444;font-weight:normal;">17</div>
<div class="t" style="left:-137.5px;width:300px;text-align:center;top:662.42px;font-size:12.5px;color:#444;font-weight:normal;">18</div>
<div class="t" style="left:-137.5px;width:300px;text-align:center;top:682.42px;font-size:12.5px;color:#444;font-weight:normal;">19</div>
<div class="t" style="left:-137.5px;width:300px;text-align:center;top:702.42px;font-size:12.5px;color:#444;font-weight:normal;">20</div>
<div class="t" style="left:-137.5px;width:300px;text-align:center;top:722.42px;font-size:12.5px;color:#444;font-weight:normal;">21</div>
<div class="t" style="left:-137.5px;width:300px;text-align:center;top:742.42px;font-size:12.5px;color:#444;font-weight:normal;">22</div>
<div class="t" style="left:-137.5px;width:300px;text-align:center;top:762.42px;font-size:12.5px;color:#444;font-weight:normal;">23</div>
<div class="t" style="left:-137.5px;width:300px;text-align:center;top:782.42px;font-size:12.5px;color:#444;font-weight:normal;">24</div>
<div class="t" style="left:-137.5px;width:300px;text-align:center;top:802.42px;font-size:12.5px;color:#444;font-weight:normal;">25</div>
<div class="t" style="left:-137.5px;width:300px;text-align:center;top:822.42px;font-size:12.5px;color:#444;font-weight:normal;">26</div>
<div class="t" style="left:28px;top:362.16px;font-size:12.8px;color:#000;font-weight:normal;">D</div>
<div class="t" style="left:-180.6px;width:300px;text-align:right;top:362.16px;font-size:12.8px;color:#000;font-weight:normal;">12</div>
<div class="t" style="left:-128.7px;width:300px;text-align:right;top:362.16px;font-size:12.8px;color:#000;font-weight:normal;">27,9</div>
<div class="t" style="left:-68.5px;width:300px;text-align:right;top:362.16px;font-size:12.8px;color:#000;font-weight:normal;">47</div>
<div class="t" style="left:28px;top:382.16px;font-size:12.8px;color:#000;font-weight:normal;">H</div>
<div class="t" style="left:-180.6px;width:300px;text-align:right;top:382.16px;font-size:12.8px;color:#000;font-weight:normal;">15</div>
<div class="t" style="left:-128.7px;width:300px;text-align:right;top:382.16px;font-size:12.8px;color:#000;font-weight:normal;">22,22</div>
<div class="t" style="left:-68.5px;width:300px;text-align:right;top:382.16px;font-size:12.8px;color:#000;font-weight:normal;">35</div>
<div class="t" style="left:28px;top:402.16px;font-size:12.8px;color:#000;font-weight:normal;">P</div>
<div class="t" style="left:-180.6px;width:300px;text-align:right;top:402.16px;font-size:12.8px;color:#000;font-weight:normal;">16</div>
<div class="t" style="left:-128.7px;width:300px;text-align:right;top:402.16px;font-size:12.8px;color:#000;font-weight:normal;">22,94</div>
<div class="t" style="left:-68.5px;width:300px;text-align:right;top:402.16px;font-size:12.8px;color:#000;font-weight:normal;">34</div>
<div class="t" style="left:28px;top:422.16px;font-size:12.8px;color:#000;font-weight:normal;">A</div>
<div class="t" style="left:-180.6px;width:300px;text-align:right;top:422.16px;font-size:12.8px;color:#000;font-weight:normal;">15</div>
<div class="t" style="left:-128.7px;width:300px;text-align:right;top:422.16px;font-size:12.8px;color:#000;font-weight:normal;">31,2</div>
<div class="t" style="left:-68.5px;width:300px;text-align:right;top:422.16px;font-size:12.8px;color:#000;font-weight:normal;">45</div>
<div class="t" style="left:28px;top:442.16px;font-size:12.8px;color:#000;font-weight:normal;">NL</div>
<div class="t" style="left:-180.6px;width:300px;text-align:right;top:442.16px;font-size:12.8px;color:#000;font-weight:normal;">23</div>
<div class="t" style="left:-128.7px;width:300px;text-align:right;top:442.16px;font-size:12.8px;color:#000;font-weight:normal;">31,24</div>
<div class="t" style="left:-68.5px;width:300px;text-align:right;top:442.16px;font-size:12.8px;color:#000;font-weight:normal;">49</div>
<div class="t" style="left:28px;top:462.16px;font-size:12.8px;color:#000;font-weight:normal;">F</div>
<div class="t" style="left:-180.6px;width:300px;text-align:right;top:462.16px;font-size:12.8px;color:#000;font-weight:normal;">15</div>
<div class="t" style="left:-128.7px;width:300px;text-align:right;top:462.16px;font-size:12.8px;color:#000;font-weight:normal;">32,09</div>
<div class="t" style="left:-68.5px;width:300px;text-align:right;top:462.16px;font-size:12.8px;color:#000;font-weight:normal;">73</div>
<div class="t" style="left:28px;top:482.16px;font-size:12.8px;color:#000;font-weight:normal;">S</div>
<div class="t" style="left:-180.6px;width:300px;text-align:right;top:482.16px;font-size:12.8px;color:#000;font-weight:normal;">20</div>
<div class="t" style="left:-128.7px;width:300px;text-align:right;top:482.16px;font-size:12.8px;color:#000;font-weight:normal;">32,51</div>
<div class="t" style="left:-68.5px;width:300px;text-align:right;top:482.16px;font-size:12.8px;color:#000;font-weight:normal;">60</div>
<div class="t" style="left:28px;top:502.16px;font-size:12.8px;color:#000;font-weight:normal;">E</div>
<div class="t" style="left:-180.6px;width:300px;text-align:right;top:502.16px;font-size:12.8px;color:#000;font-weight:normal;">14</div>
<div class="t" style="left:-128.7px;width:300px;text-align:right;top:502.16px;font-size:12.8px;color:#000;font-weight:normal;">32,89</div>
<div class="t" style="left:-68.5px;width:300px;text-align:right;top:502.16px;font-size:12.8px;color:#000;font-weight:normal;">38</div>
<div class="t" style="left:28px;top:522.16px;font-size:12.8px;color:#000;font-weight:normal;">HR</div>
<div class="t" style="left:-180.6px;width:300px;text-align:right;top:522.16px;font-size:12.8px;color:#000;font-weight:normal;">20</div>
<div class="t" style="left:-128.7px;width:300px;text-align:right;top:522.16px;font-size:12.8px;color:#000;font-weight:normal;">34,19</div>
<div class="t" style="left:-68.5px;width:300px;text-align:right;top:522.16px;font-size:12.8px;color:#000;font-weight:normal;">50</div>
<div class="t" style="left:28px;top:542.16px;font-size:12.8px;color:#000;font-weight:normal;">DK</div>
<div class="t" style="left:-180.6px;width:300px;text-align:right;top:542.16px;font-size:12.8px;color:#000;font-weight:normal;">27</div>
<div class="t" style="left:-128.7px;width:300px;text-align:right;top:542.16px;font-size:12.8px;color:#000;font-weight:normal;">37,91</div>
<div class="t" style="left:-68.5px;width:300px;text-align:right;top:542.16px;font-size:12.8px;color:#000;font-weight:normal;">72</div>
<div class="t" style="left:28px;top:562.16px;font-size:12.8px;color:#000;font-weight:normal;">I</div>
<div class="t" style="left:-180.6px;width:300px;text-align:right;top:562.16px;font-size:12.8px;color:#000;font-weight:normal;">24</div>
<div class="t" style="left:-128.7px;width:300px;text-align:right;top:562.16px;font-size:12.8px;color:#000;font-weight:normal;">41,49</div>
<div class="t" style="left:-68.5px;width:300px;text-align:right;top:562.16px;font-size:12.8px;color:#000;font-weight:normal;">74</div>
<div class="t" style="left:28px;top:582.16px;font-size:12.8px;color:#000;font-weight:normal;">CH</div>
<div class="t" style="left:-180.6px;width:300px;text-align:right;top:582.16px;font-size:12.8px;color:#000;font-weight:normal;">25</div>
<div class="t" style="left:-128.7px;width:300px;text-align:right;top:582.16px;font-size:12.8px;color:#000;font-weight:normal;">46,27</div>
<div class="t" style="left:-68.5px;width:300px;text-align:right;top:582.16px;font-size:12.8px;color:#000;font-weight:normal;">71</div>
<div class="t" style="left:114.5px;top:352.6px;font-size:13.3px;color:#111;transform-origin:0 0;transform:rotate(-90deg) translate(0,-11.26px)">billigster Campingplatz</div>
<div class="t" style="left:227.8px;top:353.5px;font-size:13.6px;color:#111;transform-origin:0 0;transform:rotate(-90deg) translate(0,-11.51px)">teuerster Campinplatz</div>
<div class="t" style="left:166px;top:352.6px;font-size:12px;color:#111;transform-origin:0 0;transform:rotate(-90deg) translate(0,-10.16px)">Ø</div>
<div style="position:absolute;left:68px;top:204px;width:162px;height:2px;background:#e5474f"></div>
<div style="position:absolute;left:63px;top:208px;width:2px;height:145px;background:#e5474f"></div>
<div style="position:absolute;left:233px;top:208px;width:2px;height:145px;background:#e5474f"></div>
<div style="position:absolute;left:68px;top:356px;width:162px;height:2px;background:#e5474f"></div>
<div style="position:absolute;left:29px;top:355px;width:32px;height:2px;background:#8c5bcc"></div>
<div style="position:absolute;left:29px;top:596px;width:32px;height:2px;background:#8c5bcc"></div>
<div style="position:absolute;left:64px;top:360px;width:2px;height:233px;background:#8c5bcc"></div>
<div style="position:absolute;left:68px;top:596px;width:162px;height:2px;background:#4d7fe6"></div>
<div style="position:absolute;left:233px;top:360px;width:2px;height:233px;background:#4d7fe6"></div>
<div style="position:absolute;left:61.0px;top:202.0px;width:7px;height:7px;background:#e5474f;border:1px solid rgba(255,255,255,0.85)"></div>
<div style="position:absolute;left:230.0px;top:202.0px;width:7px;height:7px;background:#e5474f;border:1px solid rgba(255,255,255,0.85)"></div>
<div style="position:absolute;left:230.0px;top:353.0px;width:7px;height:7px;background:#e5474f;border:1px solid rgba(255,255,255,0.85)"></div>
<div style="position:absolute;left:61.0px;top:353.0px;width:7px;height:7px;background:#8c5bcc;border:1px solid rgba(255,255,255,0.85)"></div>
<div style="position:absolute;left:61.0px;top:593.0px;width:7px;height:7px;background:#8c5bcc;border:1px solid rgba(255,255,255,0.85)"></div>
<div style="position:absolute;left:26px;top:353px;width:3px;height:7px;background:#8c5bcc"></div>
<div style="position:absolute;left:26px;top:593px;width:3px;height:7px;background:#8c5bcc"></div>
<div style="position:absolute;left:230.0px;top:593.0px;width:7px;height:7px;background:#4d7fe6;border:1px solid rgba(255,255,255,0.85)"></div>
<div style="position:absolute;left:0px;top:340px;width:25px;height:280px;background:transparent"></div>
<div style="position:absolute;left:301px;top:201px;width:957px;height:625px;background:#fff;border:1px solid #b9b9b9"></div>
<div style="position:absolute;left:304px;top:204px;width:951px;height:619px;border:1px solid #c8c8c8"></div>
<div style="position:absolute;left:299.0px;top:199.0px;width:7.6px;height:7.6px;background:#fff;border:1px solid #a9a9a9;border-radius:1.5px"></div>
<div style="position:absolute;left:299.0px;top:509.5px;width:7.6px;height:7.6px;background:#fff;border:1px solid #a9a9a9;border-radius:1.5px"></div>
<div style="position:absolute;left:299.0px;top:820.1px;width:7.6px;height:7.6px;background:#fff;border:1px solid #a9a9a9;border-radius:1.5px"></div>
<div style="position:absolute;left:775.7px;top:199.0px;width:7.6px;height:7.6px;background:#fff;border:1px solid #a9a9a9;border-radius:1.5px"></div>
<div style="position:absolute;left:775.7px;top:820.1px;width:7.6px;height:7.6px;background:#fff;border:1px solid #a9a9a9;border-radius:1.5px"></div>
<div style="position:absolute;left:1252.3px;top:199.0px;width:7.6px;height:7.6px;background:#fff;border:1px solid #a9a9a9;border-radius:1.5px"></div>
<div style="position:absolute;left:1252.3px;top:509.5px;width:7.6px;height:7.6px;background:#fff;border:1px solid #a9a9a9;border-radius:1.5px"></div>
<div style="position:absolute;left:1252.3px;top:820.1px;width:7.6px;height:7.6px;background:#fff;border:1px solid #a9a9a9;border-radius:1.5px"></div>
<div style="position:absolute;left:336.1px;top:251px;width:1px;height:509px;background:#d9d9d9"></div>
<div style="position:absolute;left:448.34px;top:251px;width:1px;height:509px;background:#d9d9d9"></div>
<div style="position:absolute;left:560.58px;top:251px;width:1px;height:509px;background:#d9d9d9"></div>
<div style="position:absolute;left:672.82px;top:251px;width:1px;height:509px;background:#d9d9d9"></div>
<div style="position:absolute;left:785.06px;top:251px;width:1px;height:509px;background:#d9d9d9"></div>
<div style="position:absolute;left:897.3px;top:251px;width:1px;height:509px;background:#d9d9d9"></div>
<div style="position:absolute;left:1009.54px;top:251px;width:1px;height:509px;background:#d9d9d9"></div>
<div style="position:absolute;left:1121.78px;top:251px;width:1px;height:509px;background:#d9d9d9"></div>
<div style="position:absolute;left:1234.02px;top:251px;width:1px;height:509px;background:#d9d9d9"></div>
<div style="position:absolute;left:336.6px;top:260.2px;width:796.9px;height:9.13px;background:#9bbb59"></div>
<div style="position:absolute;left:336.6px;top:269.03px;width:519.33px;height:9.13px;background:#c0504d"></div>
<div style="position:absolute;left:336.6px;top:277.86px;width:280.6px;height:8.83px;background:#4f81bd"></div>
<div class="t" style="left:25.19999999999999px;width:300px;text-align:right;top:267.45px;font-size:10.7px;color:#595959;font-weight:normal;transform:scaleX(0.83);transform-origin:100% 0">CH</div>
<div style="position:absolute;left:336.6px;top:302.62px;width:830.58px;height:9.13px;background:#9bbb59"></div>
<div style="position:absolute;left:336.6px;top:311.45px;width:465.68px;height:9.13px;background:#c0504d"></div>
<div style="position:absolute;left:336.6px;top:320.28px;width:269.38px;height:8.83px;background:#4f81bd"></div>
<div class="t" style="left:25.19999999999999px;width:300px;text-align:right;top:309.87px;font-size:10.7px;color:#595959;font-weight:normal;transform:scaleX(0.83);transform-origin:100% 0">I</div>
<div style="position:absolute;left:336.6px;top:345.04px;width:808.13px;height:9.13px;background:#9bbb59"></div>
<div style="position:absolute;left:336.6px;top:353.87px;width:425.5px;height:9.13px;background:#c0504d"></div>
<div style="position:absolute;left:336.6px;top:362.7px;width:303.05px;height:8.83px;background:#4f81bd"></div>
<div class="t" style="left:25.19999999999999px;width:300px;text-align:right;top:352.29px;font-size:10.7px;color:#595959;font-weight:normal;transform:scaleX(0.83);transform-origin:100% 0">DK</div>
<div style="position:absolute;left:336.6px;top:387.46px;width:561.2px;height:9.13px;background:#9bbb59"></div>
<div style="position:absolute;left:336.6px;top:396.29px;width:383.75px;height:9.13px;background:#c0504d"></div>
<div style="position:absolute;left:336.6px;top:405.12px;width:224.48px;height:8.83px;background:#4f81bd"></div>
<div class="t" style="left:25.19999999999999px;width:300px;text-align:right;top:394.71px;font-size:10.7px;color:#595959;font-weight:normal;transform:scaleX(0.83);transform-origin:100% 0">HR</div>
<div style="position:absolute;left:336.6px;top:429.88px;width:426.51px;height:9.13px;background:#9bbb59"></div>
<div style="position:absolute;left:336.6px;top:438.71px;width:369.16px;height:9.13px;background:#c0504d"></div>
<div style="position:absolute;left:336.6px;top:447.54px;width:157.14px;height:8.83px;background:#4f81bd"></div>
<div class="t" style="left:25.19999999999999px;width:300px;text-align:right;top:437.13px;font-size:10.7px;color:#595959;font-weight:normal;transform:scaleX(0.83);transform-origin:100% 0">E</div>
<div style="position:absolute;left:336.6px;top:472.3px;width:673.44px;height:9.13px;background:#9bbb59"></div>
<div style="position:absolute;left:336.6px;top:481.13px;width:364.89px;height:9.13px;background:#c0504d"></div>
<div style="position:absolute;left:336.6px;top:489.96px;width:224.48px;height:8.83px;background:#4f81bd"></div>
<div class="t" style="left:25.19999999999999px;width:300px;text-align:right;top:479.55px;font-size:10.7px;color:#595959;font-weight:normal;transform:scaleX(0.83);transform-origin:100% 0">S</div>
<div style="position:absolute;left:336.6px;top:514.72px;width:819.35px;height:9.13px;background:#9bbb59"></div>
<div style="position:absolute;left:336.6px;top:523.55px;width:360.18px;height:9.13px;background:#c0504d"></div>
<div style="position:absolute;left:336.6px;top:532.38px;width:168.36px;height:8.83px;background:#4f81bd"></div>
<div class="t" style="left:25.19999999999999px;width:300px;text-align:right;top:521.97px;font-size:10.7px;color:#595959;font-weight:normal;transform:scaleX(0.83);transform-origin:100% 0">F</div>
<div style="position:absolute;left:336.6px;top:557.14px;width:549.98px;height:9.13px;background:#9bbb59"></div>
<div style="position:absolute;left:336.6px;top:565.97px;width:350.64px;height:9.13px;background:#c0504d"></div>
<div style="position:absolute;left:336.6px;top:574.8px;width:258.15px;height:8.83px;background:#4f81bd"></div>
<div class="t" style="left:25.19999999999999px;width:300px;text-align:right;top:564.39px;font-size:10.7px;color:#595959;font-weight:normal;transform:scaleX(0.83);transform-origin:100% 0">NL</div>
<div style="position:absolute;left:336.6px;top:599.56px;width:505.08px;height:9.13px;background:#9bbb59"></div>
<div style="position:absolute;left:336.6px;top:608.39px;width:350.19px;height:9.13px;background:#c0504d"></div>
<div style="position:absolute;left:336.6px;top:617.22px;width:168.36px;height:8.83px;background:#4f81bd"></div>
<div class="t" style="left:25.19999999999999px;width:300px;text-align:right;top:606.81px;font-size:10.7px;color:#595959;font-weight:normal;transform:scaleX(0.83);transform-origin:100% 0">A</div>
<div style="position:absolute;left:336.6px;top:641.98px;width:381.62px;height:9.13px;background:#9bbb59"></div>
<div style="position:absolute;left:336.6px;top:650.81px;width:257.48px;height:9.13px;background:#c0504d"></div>
<div style="position:absolute;left:336.6px;top:659.64px;width:179.58px;height:8.83px;background:#4f81bd"></div>
<div class="t" style="left:25.19999999999999px;width:300px;text-align:right;top:649.23px;font-size:10.7px;color:#595959;font-weight:normal;transform:scaleX(0.83);transform-origin:100% 0">P</div>
<div style="position:absolute;left:336.6px;top:684.4px;width:392.84px;height:9.13px;background:#9bbb59"></div>
<div style="position:absolute;left:336.6px;top:693.23px;width:249.4px;height:9.13px;background:#c0504d"></div>
<div style="position:absolute;left:336.6px;top:702.06px;width:168.36px;height:8.83px;background:#4f81bd"></div>
<div class="t" style="left:25.19999999999999px;width:300px;text-align:right;top:691.65px;font-size:10.7px;color:#595959;font-weight:normal;transform:scaleX(0.83);transform-origin:100% 0">H</div>
<div style="position:absolute;left:336.6px;top:726.82px;width:527.53px;height:9.13px;background:#9bbb59"></div>
<div style="position:absolute;left:336.6px;top:735.65px;width:313.15px;height:9.13px;background:#c0504d"></div>
<div style="position:absolute;left:336.6px;top:744.48px;width:134.69px;height:8.83px;background:#4f81bd"></div>
<div class="t" style="left:25.19999999999999px;width:300px;text-align:right;top:734.07px;font-size:10.7px;color:#595959;font-weight:normal;transform:scaleX(0.83);transform-origin:100% 0">D</div>
<div class="t" style="left:186.60000000000002px;width:300px;text-align:center;top:770.11px;font-size:10.5px;color:#595959;font-weight:normal;">0</div>
<div class="t" style="left:298.84000000000003px;width:300px;text-align:center;top:770.11px;font-size:10.5px;color:#595959;font-weight:normal;">10</div>
<div class="t" style="left:411.08000000000004px;width:300px;text-align:center;top:770.11px;font-size:10.5px;color:#595959;font-weight:normal;">20</div>
<div class="t" style="left:523.32px;width:300px;text-align:center;top:770.11px;font-size:10.5px;color:#595959;font-weight:normal;">30</div>
<div class="t" style="left:635.5600000000001px;width:300px;text-align:center;top:770.11px;font-size:10.5px;color:#595959;font-weight:normal;">40</div>
<div class="t" style="left:747.8000000000001px;width:300px;text-align:center;top:770.11px;font-size:10.5px;color:#595959;font-weight:normal;">50</div>
<div class="t" style="left:860.0400000000001px;width:300px;text-align:center;top:770.11px;font-size:10.5px;color:#595959;font-weight:normal;">60</div>
<div class="t" style="left:972.2800000000002px;width:300px;text-align:center;top:770.11px;font-size:10.5px;color:#595959;font-weight:normal;">70</div>
<div class="t" style="left:1084.52px;width:300px;text-align:center;top:770.11px;font-size:10.5px;color:#595959;font-weight:normal;">80</div>
<div style="position:absolute;left:636px;top:799.5px;width:7px;height:7px;background:#9bbb59"></div>
<div class="t" style="left:646px;top:796.69px;font-size:11px;color:#595959;font-weight:normal;">teuerster Campinplatz</div>
<div style="position:absolute;left:772px;top:799.5px;width:7px;height:7px;background:#c0504d"></div>
<div class="t" style="left:781px;top:796.69px;font-size:11px;color:#595959;font-weight:normal;">Ø</div>
<div style="position:absolute;left:807px;top:799.5px;width:7px;height:7px;background:#4f81bd"></div>
<div class="t" style="left:816px;top:796.69px;font-size:11px;color:#595959;font-weight:normal;">billigster Campingplatz</div>
<div style="position:absolute;left:1268px;top:203px;width:28px;height:28px;background:#fff;border:1px solid #b9b9b9"></div>
<div style="position:absolute;left:1268px;top:241px;width:28px;height:28px;background:#fff;border:1px solid #b9b9b9"></div>
<div style="position:absolute;left:1268px;top:279px;width:28px;height:28px;background:#fff;border:1px solid #b9b9b9"></div>
<svg style="left:1270px;top:205px" width="24" height="24" viewBox="1270 205 24 24"><path d="M1282 210V223.8M1275 216.9H1289" stroke="#5b9f81" stroke-width="4.4"/></svg>
<svg style="left:1270px;top:243px" width="24" height="24" viewBox="1270 243 24 24"><path d="M1291.5 245.8 L1292 250 L1286 256.5 L1283.8 254.6Z" fill="#6a6a6a"/><path d="M1283.4 255.2 L1285.4 257 L1284.6 258 L1282.4 256.2Z" fill="#8a8a8a"/><path d="M1282 256.6 L1284.4 258.6 Q1284 262 1279 262.7 L1273.3 262.8 Q1276 261 1277.5 258.6 Q1279 256.4 1282 256.6Z" fill="#3a78c2"/><path d="M1279.5 259.5 Q1281 258.6 1282.5 259.3" fill="none" stroke="#fff" stroke-width="0.9"/></svg>
<svg style="left:1270px;top:281px" width="24" height="24" viewBox="1270 281 24 24"><path d="M1272.9 284.8 H1291.2 L1284.8 292.5 V300.4 H1281.3 V292.5Z" fill="#6a6a6a"/><path d="M1282.4 293 V299.4 H1283.7 V293Z" fill="#fff"/></svg>
<div style="position:absolute;left:697px;top:53px;width:206px;height:187px;background:#fff;border:1px solid #c6c6c6;box-shadow:1px 2px 3px rgba(0,0,0,0.12)"></div>
<div style="position:absolute;left:698px;top:54.5px;width:204px;height:23px;background:#ececec"></div>
<div class="t" style="left:707.5px;top:60.84px;font-size:12px;color:#666;font-weight:bold;">2D-Balken</div>
<div style="position:absolute;left:699px;top:77.5px;width:56px;height:56px;background:#d1ecdc"></div>
<svg style="left:707px;top:87px" width="32" height="37" viewBox="0 0 32 37"><path d="M1 0.5V36.5H29" fill="none" stroke="#777" stroke-width="1.2"/><rect x="1" y="2" width="20.5" height="6.8" fill="#fff" stroke="#777" stroke-width="1.1"/><rect x="1" y="9.6" width="29.5" height="6.7" fill="#cfcfcf" stroke="#777" stroke-width="1.1"/><rect x="1" y="19.6" width="27.5" height="6.7" fill="#fff" stroke="#777" stroke-width="1.1"/><rect x="1" y="26.8" width="20" height="6.4" fill="#cfcfcf" stroke="#777" stroke-width="1.1"/></svg>
<svg style="left:763px;top:87px" width="40" height="37" viewBox="0 0 40 37"><path d="M1 0.5V36.5H39.5" fill="none" stroke="#777" stroke-width="1.2"/><rect x="1" y="4.3" width="11" height="10" fill="#fff" stroke="#777" stroke-width="1.1"/><rect x="12" y="4.3" width="17" height="10" fill="#cfcfcf" stroke="#777" stroke-width="1.1"/><rect x="1" y="21.3" width="16.5" height="10" fill="#fff" stroke="#777" stroke-width="1.1"/><rect x="17.5" y="21.3" width="17" height="10" fill="#cfcfcf" stroke="#777" stroke-width="1.1"/></svg>
<svg style="left:819px;top:87px" width="40" height="37" viewBox="0 0 40 37"><path d="M1 0.5V36.5H39.5" fill="none" stroke="#777" stroke-width="1.2"/><rect x="1" y="4.3" width="11" height="10" fill="#fff" stroke="#777" stroke-width="1.1"/><rect x="12" y="4.3" width="23" height="10" fill="#cfcfcf" stroke="#777" stroke-width="1.1"/><rect x="1" y="21.3" width="16.5" height="10" fill="#fff" stroke="#777" stroke-width="1.1"/><rect x="17.5" y="21.3" width="17.5" height="10" fill="#cfcfcf" stroke="#777" stroke-width="1.1"/></svg>
<div style="position:absolute;left:698px;top:134px;width:204px;height:23px;background:#ececec"></div>
<div class="t" style="left:707.5px;top:140.34px;font-size:12px;color:#666;font-weight:bold;">3D-Balken</div>
<svg style="left:704px;top:163px" width="40" height="45" viewBox="704 163 40 45"><path d="M711.4 165.2 V201.4 H744" fill="none" stroke="#777" stroke-width="1"/><path d="M707 205.7 L711.4 201.4" stroke="#777" stroke-width="1"/><path d="M708.7 170.1 L711.5 167.3 H730.5 L727.9 170.1Z" fill="#fff" stroke="#777" stroke-width="1"/><path d="M708.7 170.1 H727.9 V176.8 H708.7Z" fill="#fff" stroke="#777" stroke-width="1"/><path d="M727.9 176.8 L730.5 174 V167.3" fill="none" stroke="#777" stroke-width="1"/><path d="M727.9 172.5 H744 V182.5 H708.7 V176.8 H727.9Z" fill="#cfcfcf" stroke="#777" stroke-width="1"/><path d="M708.7 186.6 L711.5 183.8 H744 V192.9 H708.7Z" fill="#fff" stroke="#777" stroke-width="1"/><path d="M708.7 186.6 H744" stroke="#777" stroke-width="1"/><path d="M708.7 192.9 H727.9 V199.1 H708.7Z" fill="#cfcfcf" stroke="#777" stroke-width="1"/><path d="M727.9 199.1 L731 196 V192.9" fill="#cfcfcf" stroke="#777" stroke-width="1"/></svg>
<div style="position:absolute;left:698px;top:212.5px;width:204px;height:1px;background:#e1e1e1"></div>
<svg style="left:703px;top:221px" width="17" height="13" viewBox="0 0 17 13"><path d="M1 0V12.5H16" fill="none" stroke="#777" stroke-width="1.3"/><path d="M1 2.5H15M1 6H10M1 9.5H12" stroke="#777" stroke-width="2"/></svg>
<div class="t" style="left:731px;top:220px;font-size:12px;color:#444;text-decoration:underline">Weitere Balkendiagramme...</div>
<svg style="left:735px;top:107px" width="14" height="21" viewBox="0 0 14 21"><path d="M0.5 0.5 V16.5 L4.2 13 L7 19.5 L9.6 18.3 L6.9 12.1 L11.8 12.1 Z" fill="#fff" stroke="#222" stroke-width="1"/></svg>
<div style="position:absolute;left:735px;top:128px;width:205px;height:204px;background:#fff;border:1px solid #bcbcbc;box-shadow:1px 1px 3px rgba(0,0,0,0.15)"></div>
<div class="t" style="left:747.5px;top:137.43px;font-size:11.9px;color:#555;font-weight:bold;">Gruppierte Balken</div>
<div class="t" style="left:747.5px;top:158.25px;font-size:11.75px;color:#555;font-weight:normal;">Verwenden Sie diesen</div>
<div class="t" style="left:747.5px;top:173.25px;font-size:11.75px;color:#555;font-weight:normal;">Diagrammtyp für folgende</div>
<div class="t" style="left:747.5px;top:188.25px;font-size:11.75px;color:#555;font-weight:normal;">Funktionen:</div>
<div class="t" style="left:747.5px;top:203.25px;font-size:11.75px;color:#555;font-weight:normal;">• Werte zwischen Rubriken</div>
<div class="t" style="left:747.5px;top:218.25px;font-size:11.75px;color:#555;font-weight:normal;">vergleichen.</div>
<div class="t" style="left:747.5px;top:248.25px;font-size:11.75px;color:#555;font-weight:normal;">Verwenden Sie den Diagrammtyp</div>
<div class="t" style="left:747.5px;top:263.25px;font-size:11.75px;color:#555;font-weight:normal;">in folgenden Fällen:</div>
<div class="t" style="left:747.5px;top:278.25px;font-size:11.75px;color:#555;font-weight:normal;">• Das Diagramm stellt eine Dauer</div>
<div class="t" style="left:747.5px;top:293.25px;font-size:11.75px;color:#555;font-weight:normal;">dar.</div>
<div class="t" style="left:747.5px;top:308.25px;font-size:11.75px;color:#555;font-weight:normal;">• Der Rubrikentext ist zu lang.</div>
</body></html>
